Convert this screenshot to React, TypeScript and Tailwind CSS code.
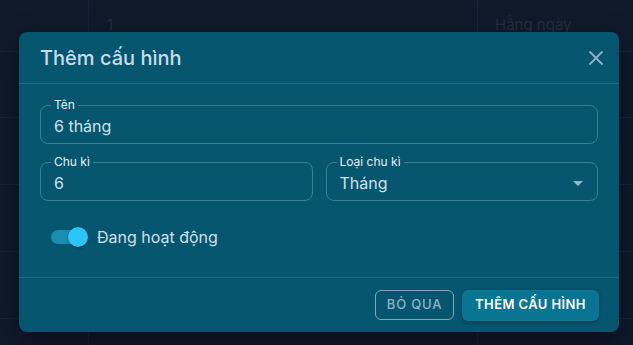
import React from "react";

const rows = [
  { id: "1", type: "Hằng ngày", h: "h-[52px]" },
  { id: "", type: "", h: "h-[66px]" },
  { id: "", type: "", h: "h-[67px]" },
  { id: "", type: "", h: "h-[67px]" },
  { id: "", type: "", h: "h-[67px]" },
  { id: "", type: "", h: "h-[40px]" },
];

const Field = ({
  label,
  value,
  select,
}: {
  label: string;
  value: string;
  select?: boolean;
}) => (
  <div className="relative flex h-[39px] flex-1 items-center rounded-lg border border-[#3a7f96] px-[13px] pt-[3px]">
    <span className="absolute -top-[8px] left-[10px] bg-[#06566f] px-[3px] text-[12px] leading-[14px] text-[#e6eef2]">
      {label}
    </span>
    <span className="text-[16px] leading-[20px] text-[#cfe0ea]">{value}</span>
    {select && (
      <svg
        className="absolute right-[14px] top-[18px]"
        width="10"
        height="5"
        viewBox="0 0 10 5"
      >
        <path d="M0 0h10L5 5z" fill="#8fb9ca" />
      </svg>
    )}
  </div>
);

export default function App() {
  return (
    <div className="relative h-[345px] w-[633px] overflow-hidden bg-[#101a2b] font-['Inter','Liberation_Sans',sans-serif]">
      {/* background table */}
      <div className="flex flex-col">
        {rows.map((r, i) => (
          <div
            key={i}
            className={`grid grid-cols-[89px_389px_155px] border-b border-[#17233a] ${r.h}`}
          >
            <div className="border-r border-[#17233a]" />
            <div className="flex items-center border-r border-[#17233a] pl-[18px] text-[15px] text-[#232e40]">
              {r.id}
            </div>
            <div className="flex items-center pl-[17px] text-[15px] text-[#232e40]">
              {r.type}
            </div>
          </div>
        ))}
      </div>

      {/* dialog */}
      <div className="absolute left-[19px] top-[32px] flex h-[300px] w-[600px] flex-col rounded-lg bg-[#06566f] shadow-[0_10px_30px_rgba(0,0,0,0.4)]">
        <div className="flex h-[52px] items-center justify-between border-b border-[#1d6a82] pl-[21px] pr-[16px]">
          <h2 className="text-[20px] font-medium text-[#c9dbea]">Thêm cấu hình</h2>
          <svg width="14" height="14" viewBox="0 0 14 14">
            <path
              d="M1 1l12 12M13 1L1 13"
              stroke="#8fb3c4"
              strokeWidth="1.8"
              strokeLinecap="round"
            />
          </svg>
        </div>

        <div className="flex flex-1 flex-col gap-[18px] px-[21px] pt-[21px]">
          <div className="flex">
            <Field label="Tên" value="6 tháng" />
          </div>
          <div className="flex gap-[13px]">
            <Field label="Chu kì" value="6" />
            <Field label="Loại chu kì" value="Tháng" select />
          </div>
          <div className="mt-[6px] flex items-center gap-[9px] pl-[11px]">
            <div className="relative h-[14px] w-[32px] rounded-full bg-[#1a8db5]">
              <div className="absolute -right-[5px] -top-[3px] h-[20px] w-[20px] rounded-full bg-[#2ac6f7] shadow-[0_1px_3px_rgba(0,0,0,0.35)]" />
            </div>
            <span className="pl-[5px] text-[16px] text-[#cfe0ea]">Đang hoạt động</span>
          </div>
        </div>

        <div className="flex h-[55px] items-center justify-end gap-[8px] border-t border-[#1d6a82] pr-[20px]">
          <button className="h-[30px] w-[79px] rounded-md border border-[#7fa9ba] text-[13px] font-medium tracking-[0.8px] text-[#8fb3c4]">
            BỎ QUA
          </button>
          <button className="h-[31px] w-[137px] rounded-md bg-[#097593] text-[13px] font-semibold tracking-[0.4px] text-white shadow-[0_2px_4px_rgba(0,0,0,0.25)]">
            THÊM CẤU HÌNH
          </button>
        </div>
      </div>
    </div>
  );
}
